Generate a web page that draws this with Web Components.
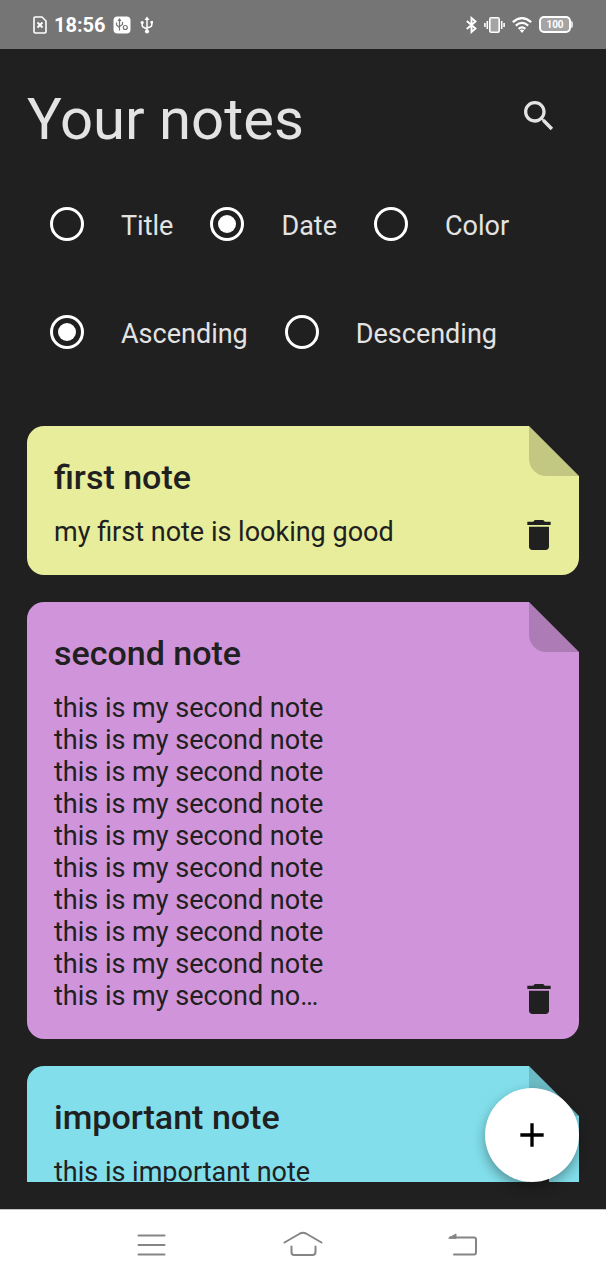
<!DOCTYPE html>
<html lang="en">
<head>
<meta charset="utf-8">
<meta name="viewport" content="width=device-width, initial-scale=1">
<title>Your notes</title>
<style>
  body { margin: 0; background: #202020; font-family: Roboto, "Liberation Sans", sans-serif; }
</style>
</head>
<body>
<notes-screen>
  <status-bar slot="top"></status-bar>
  <note-header slot="header">Your notes</note-header>
  <sort-options slot="header"></sort-options>
  <note-card color="#e7ed9b"><span slot="title">first note</span>my first note is looking good</note-card>
  <note-card color="#cf94da"><span slot="title">second note</span>this is my second note
this is my second note
this is my second note
this is my second note
this is my second note
this is my second note
this is my second note
this is my second note
this is my second note
this is my second no…</note-card>
  <note-card color="#81deea"><span slot="title">important note</span>this is important note</note-card>
  <add-button slot="fab"></add-button>
  <nav-bar slot="bottom"></nav-bar>
</notes-screen>

<script>
const define = (name, html, setup) => customElements.define(name, class extends HTMLElement {
  connectedCallback() {
    if (this.shadowRoot) return;
    this.attachShadow({ mode: 'open' }).innerHTML = html;
    if (setup) setup(this);
  }
});

define('notes-screen', `
<style>
  :host { display: flex; flex-direction: column; height: 100vh; background: #202020; color: #e3e3e3; }
  main { position: relative; flex: 1; min-height: 0; display: flex; flex-direction: column; padding: 27px; }
  .list { flex: 1; min-height: 0; margin-top: 54px; display: flex; flex-direction: column; gap: 27px; overflow-y: auto; scrollbar-width: none; }
  .fab { position: absolute; right: 27px; bottom: 27px; }
</style>
<slot name="top"></slot>
<main>
  <slot name="header"></slot>
  <div class="list"><slot></slot></div>
  <div class="fab"><slot name="fab"></slot></div>
</main>
<slot name="bottom"></slot>`);

define('status-bar', `
<style>
  :host { display: flex; align-items: center; justify-content: space-between; height: 49px; padding: 0 33px; background: #757575; color: #fff; flex: none; }
  div { display: flex; align-items: center; gap: 7px; }
  time { font-size: 20px; line-height: 24px; font-weight: 700; }
  svg { display: block; }
  .usb { margin-left: 2px; }
  .battery { gap: 0; }
  .level { box-sizing: border-box; width: 32px; height: 17px; border: 2px solid #fff; border-radius: 5px; background: #a4a4a4; font-size: 10px; line-height: 13px; font-weight: 700; text-align: center; }
  .tip { width: 2px; height: 7px; background: #ddd; border-radius: 0 2px 2px 0; }
</style>
<div>
  <svg width="14" height="18" viewBox="0 0 14 18" fill="none" stroke="#fff"><path d="M1 2.200Q1 1 2.200 1H9L13 5V15.800Q13 17 11.800 17H2.200Q1 17 1 15.800Z" stroke-width="1.600"/><path d="M4.500 6.500L9.500 11.500M9.500 6.500L4.500 11.500" stroke-width="1.900"/></svg>
  <time>18:56</time>
  <svg width="18" height="18" viewBox="0 0 18 18"><rect x=".5" y=".5" width="17" height="17" rx="4" fill="#fff"/><g fill="none" stroke="#757575" stroke-width="1.200"><path d="M6.500 3V14.500M5 5L6.500 3L8 5M3.500 6.500V9L6.500 11.500M9.500 6V8.500L6.500 10.500"/><circle cx="12.300" cy="11.500" r="2"/></g></svg>
  <svg class="usb" width="14" height="18" viewBox="0 0 14 18" fill="none" stroke="#fff" stroke-width="1.500"><path d="M7 3V15M2.200 7V9.500Q2.200 11 4 11.500L7 13M11.800 7V9Q11.800 10.500 10 11L7 12"/><path d="M7 .5L9.500 4H4.500ZM10.500 5H13V7.500H10.500Z" fill="#fff" stroke="none"/><circle cx="2.200" cy="6.500" r="1.600" fill="#fff" stroke="none"/><circle cx="7" cy="15.500" r="2.100" fill="#fff" stroke="none"/></svg>
</div>
<div>
  <svg width="11" height="18" viewBox="0 0 11 18" fill="none" stroke="#fff" stroke-width="1.900"><path d="M.8 5L9.500 12.500L5.500 16V2L9.500 5.500L.8 13"/></svg>
  <svg width="21" height="18" viewBox="0 0 21 18" fill="none" stroke="#fff" stroke-width="1.600"><rect x="5.800" y="1.800" width="9.400" height="14.400" rx="1.500" fill="#a4a4a4"/><path d="M3.300 5V13M.9 7V11M17.700 5V13M20.100 7V11"/></svg>
  <svg width="20" height="18" viewBox="0 0 20 18" fill="none" stroke="#fff" stroke-width="2.200"><path d="M.8 6.200Q10 -1.800 19.200 6.200M3.800 9.600Q10 4.200 16.200 9.600M6.600 12.800Q10 10 13.400 12.800"/><path d="M7.800 14.300Q10 12.800 12.200 14.300L10 17Z" fill="#fff" stroke="none"/></svg>
  <div class="battery"><span class="level">100</span><span class="tip"></span></div>
</div>`);

define('note-header', `
<style>
  :host { display: flex; align-items: center; justify-content: space-between; height: 80px; flex: none; }
  h1 { margin: 0; padding-top: 6px; font-size: 58px; line-height: 68px; font-weight: 400; }
  button { width: 81px; height: 80px; padding: 0; border: 0; background: none; color: #e3e3e3; display: grid; place-items: center; cursor: pointer; }
</style>
<h1><slot></slot></h1>
<button type="button" aria-label="Search"><svg width="40" height="40" viewBox="0 0 24 24" fill="currentColor"><path d="M15.500 14h-.79l-.28-.27C15.410 12.590 16 11.110 16 9.500 16 5.910 13.090 3 9.500 3S3 5.910 3 9.500 5.910 16 9.500 16c1.610 0 3.090-.59 4.230-1.570l.27.28v.79l5 4.990L20.490 19l-4.990-5zm-6 0C7.010 14 5 11.990 5 9.500S7.010 5 9.500 5 14 7.010 14 9.500 11.990 14 9.500 14z"/></svg></button>`);

define('sort-options', `
<style>
  :host { display: flex; flex-direction: column; gap: 27px; margin-top: 27px; flex: none; }
  fieldset { display: flex; gap: 14px; margin: 0; padding: 0; border: 0; min-width: 0; }
  label { display: flex; align-items: center; gap: 14px; height: 81px; font-size: 27px; line-height: 32px; cursor: pointer; }
  label span { padding-top: 4px; }
  input { appearance: none; box-sizing: border-box; flex: none; width: 34px; height: 34px; margin: 0 23px; border: 3px solid #fff; border-radius: 50%; display: grid; place-items: center; }
  input:checked::before { content: ""; width: 18px; height: 18px; border-radius: 50%; background: #fff; }
</style>
<fieldset aria-label="Sort by">
  <label><input type="radio" name="field"><span>Title</span></label>
  <label><input type="radio" name="field" checked><span>Date</span></label>
  <label><input type="radio" name="field"><span>Color</span></label>
</fieldset>
<fieldset aria-label="Direction">
  <label><input type="radio" name="direction" checked><span>Ascending</span></label>
  <label><input type="radio" name="direction"><span>Descending</span></label>
</fieldset>`);

define('note-card', `
<style>
  :host { display: block; flex: none; color: #202020; }
  article { display: grid; border-radius: 17px; background: var(--note-color); clip-path: polygon(0 0, calc(100% - 50px) 0, 100% 50px, 100% 100%, 0 100%); }
  .text, .fold, button { grid-area: 1 / 1; }
  .text { padding: 27px 54px 27px 27px; }
  h2 { margin: 0 0 15px; font-size: 34px; line-height: 48px; font-weight: 500; }
  p { margin: 0; font-size: 27px; line-height: 32px; white-space: pre-line; }
  .fold { place-self: start end; width: 50px; height: 50px; border-bottom-left-radius: 17px; background: rgba(0, 0, 0, .16); }
  button { place-self: end; width: 81px; height: 81px; padding: 0; border: 0; background: none; color: inherit; display: grid; place-items: center; cursor: pointer; }
</style>
<article>
  <div class="text"><h2><slot name="title"></slot></h2><p><slot></slot></p></div>
  <div class="fold"></div>
  <button type="button" aria-label="Delete note"><svg width="40" height="40" viewBox="0 0 24 24" fill="currentColor"><path d="M6 19c0 1.100.9 2 2 2h8c1.100 0 2-.9 2-2V7H6v12zM19 4h-3.500l-1-1h-5l-1 1H5v2h14V4z"/></svg></button>
</article>`, el => el.style.setProperty('--note-color', el.getAttribute('color')));

define('add-button', `
<style>
  :host { display: block; }
  button { width: 94px; height: 94px; padding: 0; border: 0; border-radius: 50%; background: #fff; color: #000; display: grid; place-items: center; box-shadow: 0 5px 12px rgba(0, 0, 0, .35); cursor: pointer; }
</style>
<button type="button" aria-label="Add note"><svg width="40" height="40" viewBox="0 0 24 24" fill="currentColor"><path d="M19 13h-6v6h-2v-6H5v-2h6V5h2v6h6v2z"/></svg></button>`);

define('nav-bar', `
<style>
  :host { display: block; flex: none; background: #fff; border-top: 1px solid #c4c4c4; }
  nav { display: flex; justify-content: space-between; height: 70px; padding: 0 20%; }
  button { width: 60px; padding: 0; border: 0; background: none; display: grid; place-items: center; cursor: pointer; }
  svg { fill: none; stroke: #858585; stroke-width: 2; stroke-linecap: round; stroke-linejoin: round; }
</style>
<nav>
  <button type="button" aria-label="Recent apps"><svg width="60" height="30" viewBox="0 0 60 30"><path d="M17.500 5.500H43.500M17.500 15H43.500M17.500 24.500H43.500"/></svg></button>
  <button type="button" aria-label="Home"><svg width="60" height="30" viewBox="0 0 60 30"><path d="M11.500 12.500L27 3.500Q30 2 33 3.500L48.500 12.500M18.500 16.500V22Q18.500 25 21 25H39.500Q42.500 25 42.500 22V16.500"/></svg></button>
  <button type="button" aria-label="Back"><svg width="60" height="30" viewBox="0 0 60 30"><path d="M25 7.500H49Q51 7.500 51 9.500V22Q51 24.500 49 24.500H29"/><path d="M24 8L31 4V8Z" fill="#858585" stroke-width="1"/></svg></button>
</nav>`);
</script>
</body>
</html>
